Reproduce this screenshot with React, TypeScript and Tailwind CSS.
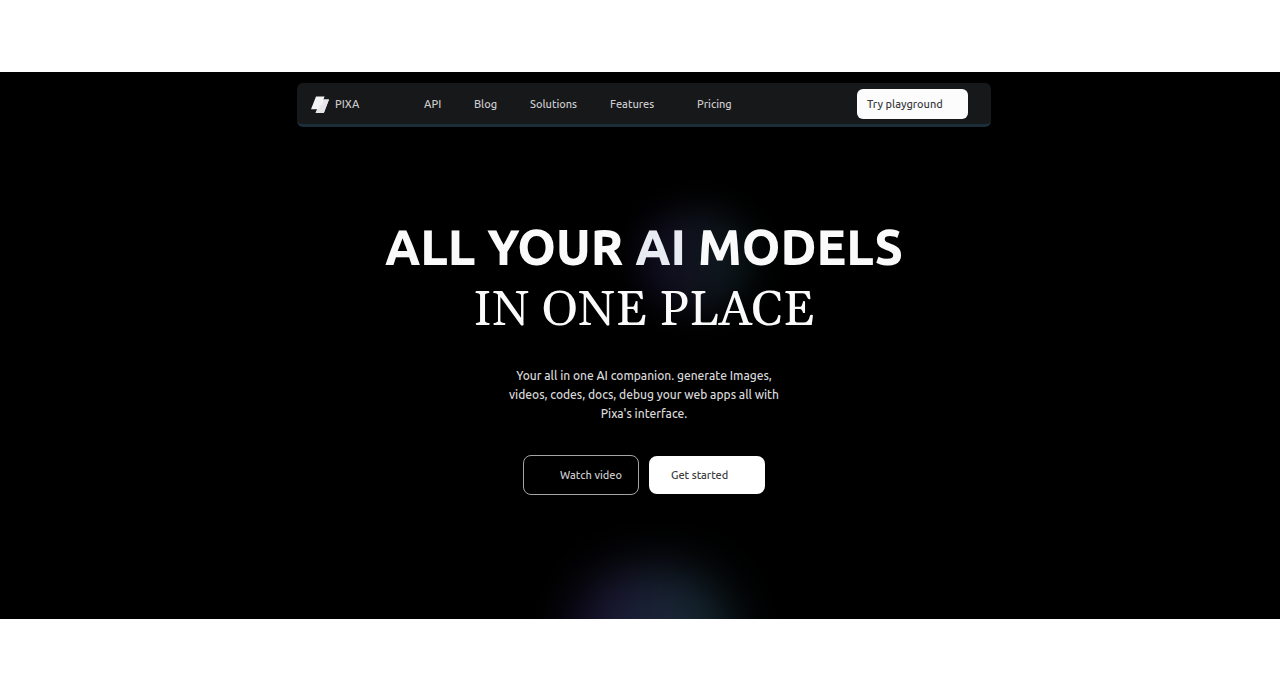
const links = [
  { label: "API", space: "w-[50px]" },
  { label: "Blog", space: "w-[56px]" },
  { label: "Solutions", space: "w-20" },
  { label: "Features", space: "w-[87px]" },
  { label: "Pricing", space: "w-20" },
];

function Logo() {
  return (
    <svg width="18" height="17" viewBox="0 0 18 17" aria-hidden="true">
      <path d="M5 0.5H13.6L12.4 3.5H18L12.8 17H4.6L6.2 13.2H0Z" fill="#f4f4f5" />
      <path d="M12.4 3.5H18L12.8 17H4.6L6.2 13.2 9 12.6 8.2 9.5 11.4 8.8Z" fill="#e6e6e8" />
    </svg>
  );
}

function Header() {
  return (
    <header className="relative flex h-11 w-full max-w-[694px] items-center rounded-md border-b-3 border-[#1a2d39] bg-[#17181a] pt-px pr-[23px] pl-3.5 text-[11px] font-medium text-[#cbcbcd]">
      <a href="#" className="flex w-[113px] items-center gap-1.5">
        <Logo />
        PIXA
      </a>
      <nav className="flex flex-1">
        {links.map((link) => (
          <div key={link.label} className={`${link.space} shrink-0`}>
            <a href="#">{link.label}</a>
          </div>
        ))}
      </nav>
      <button className="h-[30px] w-[111px] rounded-md bg-[#fcfcfc] pl-2.5 text-left text-[#3b3b3d]">
        Try playground
      </button>
    </header>
  );
}

export default function App() {
  return (
    <div className="min-h-screen bg-white py-18 font-['Ubuntu','Noto_Sans',sans-serif]">
      <section className="relative isolate flex min-h-[547px] flex-col items-center overflow-hidden bg-black pt-[11px] pl-2">
        <div className="absolute top-[138px] left-1/2 -z-10 h-[100px] w-[112px] rounded-full bg-linear-to-r from-[#110b22] via-[#10131d] to-[#0a191b] blur-lg" />
        <div className="absolute -bottom-[80px] left-1/2 -z-10 h-[130px] w-[160px] -translate-x-[67px] rounded-full bg-linear-to-r from-[#190f30] via-[#1b2538] via-55% to-[#10262a] blur-xl" />
        <Header />
        <main className="mt-[90px] flex flex-col items-center text-center">
          <h1 className="text-[#fafafa]">
            <span className="block text-[49px] leading-[60px] font-extrabold">ALL YOUR <span className="text-[#e8ebf1]">AI</span> MODELS</span>
            <span className="mt-1 block font-['Gelasio','Georgia','Liberation_Serif',serif] text-[49px] leading-[60px]">IN ONE PLACE</span>
          </h1>
          <p className="mt-[25px] w-[290px] text-[12px] leading-[19px] font-medium text-[#d8d8da]">
            Your all in one AI companion. generate Images, videos, codes, docs, debug your web apps all with Pixa's interface.
          </p>
          <div className="mt-8 flex items-center gap-2.5 text-[11px] font-medium">
            <button className="h-10 w-[116px] rounded-lg border border-[#a5a5a5] pr-4 text-right text-[#cbcbcd]">
              Watch video
            </button>
            <button className="h-[38px] w-[116px] rounded-lg bg-white pl-[22px] text-left text-[#3b3b3d]">
              Get started
            </button>
          </div>
        </main>
      </section>
    </div>
  );
}
